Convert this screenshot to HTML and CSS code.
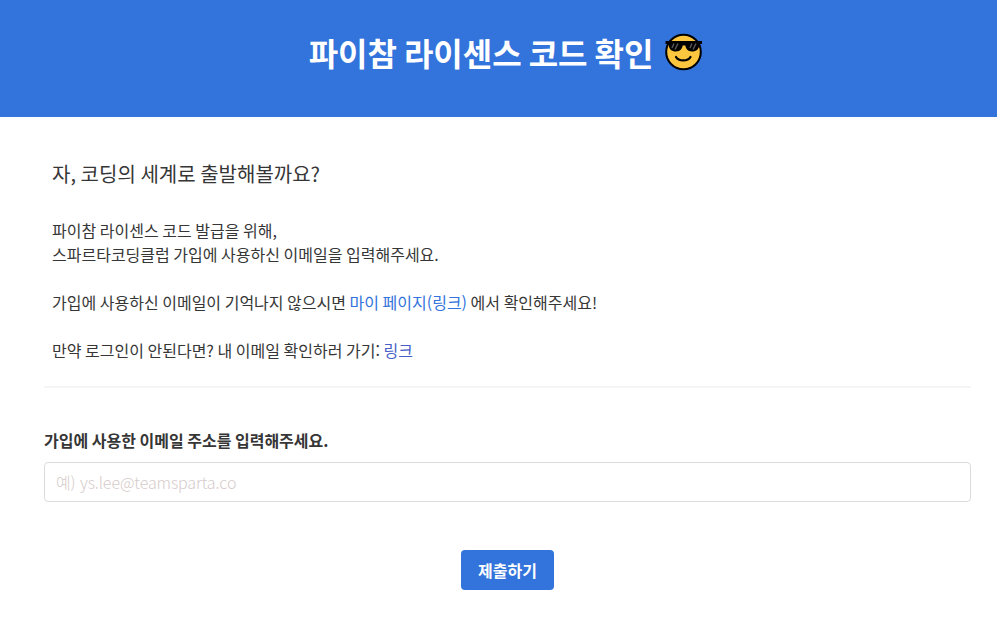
FILE: index.html
```html
<!DOCTYPE html>
<html lang="ko">
<head>
<meta charset="utf-8">
<title>파이참 라이센스 코드 확인</title>
<link rel="stylesheet" href="styles.css">
</head>
<body>
<header class="hero">
  <h1 class="hero-title">파이참 라이센스 코드 확인
    <svg class="emoji" viewBox="0 0 38 38" width="38" height="38" aria-hidden="true">
      <circle cx="18.500" cy="19" r="17.300" fill="#fcc63f" stroke="#000" stroke-width="2"/>
      <path d="M0.500 8H37V11H34.500C34.300 16 31.500 18.500 27 18.500C23 18.500 20.700 15.500 20.300 12.500H17.700C17.300 15.500 15 18.500 11 18.500C6.500 18.500 3.700 16 3.500 11H0.500Z" fill="#000"/>
      <path d="M9 10.500 7 15M13 10.500 10 16.500M27 10.500 25 15M31 10.500 28 16.500" stroke="#555" stroke-width="1.500"/>
      <path d="M11 24C13.500 28.500 23 28.500 25.500 24" fill="none" stroke="#000" stroke-width="2.200" stroke-linecap="round"/>
    </svg>
  </h1>
</header>
<main class="content">
  <section class="intro">
    <h2 class="intro-title">자, 코딩의 세계로 출발해볼까요?</h2>
    <p class="intro-text">파이참 라이센스 코드 발급을 위해,<br>스파르타코딩클럽 가입에 사용하신 이메일을 입력해주세요.</p>
    <p class="intro-text">가입에 사용하신 이메일이 기억나지 않으시면 <a class="link" href="#">마이 페이지(링크)</a> 에서 확인해주세요!</p>
    <p class="intro-text">만약 로그인이 안된다면? 내 이메일 확인하러 가기: <a class="link link-dark" href="#">링크</a></p>
  </section>
  <hr class="divider">
  <form class="form">
    <label class="label" for="email">가입에 사용한 이메일 주소를 입력해주세요.</label>
    <input class="input" id="email" type="text" placeholder="예) ys.lee@teamsparta.co">
    <div class="actions"><button class="submit" type="button">제출하기</button></div>
  </form>
</main>
</body>
</html>
```
FILE: styles.css
```css
* { box-sizing: border-box; }
html, body { margin: 0; padding: 0; }
body {
  background: #fff;
  color: #363636;
  font-family: "Noto Sans CJK KR", "Noto Sans", sans-serif;
  font-size: 16px;
  word-spacing: -0.9px;
  overflow: hidden;
}
.hero {
  background: #3273dc;
  height: 117px;
  display: flex;
  align-items: center;
  justify-content: center;
  padding: 0 0 13px 15px;
}
.hero-title {
  margin: 0;
  color: #fff;
  font-size: 32px;
  font-weight: 700;
  line-height: 38px;
  word-spacing: -2px;
  display: flex;
  align-items: center;
  gap: 12px;
}
.emoji { display: block; flex: none; }
.content { padding: 0 26px 0 44px; }
.intro { padding: 42px 0 0 8px; }
.intro-title {
  margin: 0 0 29px;
  font-size: 20px;
  font-weight: 400;
  line-height: 30px;
  word-spacing: -1px;
}
.intro-text {
  margin: 0 0 24px;
  font-size: 16px;
  line-height: 24px;
}
.link { color: #3273dc; text-decoration: none; }
.link-dark { color: #485fc7; }
.divider {
  border: 0;
  height: 2px;
  background: #f5f5f5;
  margin: 0;
}
.form { display: block; padding-top: 40px; }
.label {
  display: block;
  font-size: 16px;
  font-weight: 700;
  line-height: 24px;
  margin-bottom: 10px;
}
.input {
  display: block;
  width: 100%;
  height: 40px;
  padding: 0 11px;
  border: 1px solid #dbdbdb;
  border-radius: 4px;
  background: #fff;
  font: inherit;
  font-weight: 300;
  letter-spacing: -0.1px;
  color: #363636;
}
.input::placeholder { color: #d6cbcb; opacity: 1; }
.actions { display: flex; justify-content: center; padding-top: 48px; }
.submit {
  width: 93px;
  height: 40px;
  border: 0;
  border-radius: 4px;
  background: #3273dc;
  color: #fff;
  font: inherit;
  font-weight: 700;
}
```
